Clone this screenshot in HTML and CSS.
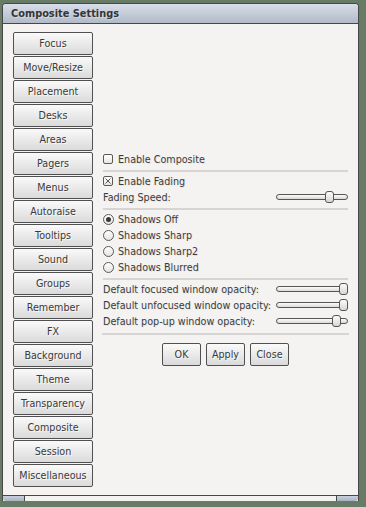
FILE: index.html
```html
<!DOCTYPE html>
<html>
<head>
<meta charset="utf-8">
<link rel="stylesheet" href="styles.css">
</head>
<body>
<div class="window">
  <div class="titlebar">Composite Settings</div>
  <div class="client">
    <div class="tabs">
      <div class="btn tab">Focus</div>
      <div class="btn tab">Move/Resize</div>
      <div class="btn tab">Placement</div>
      <div class="btn tab">Desks</div>
      <div class="btn tab">Areas</div>
      <div class="btn tab">Pagers</div>
      <div class="btn tab">Menus</div>
      <div class="btn tab">Autoraise</div>
      <div class="btn tab">Tooltips</div>
      <div class="btn tab">Sound</div>
      <div class="btn tab">Groups</div>
      <div class="btn tab">Remember</div>
      <div class="btn tab">FX</div>
      <div class="btn tab">Background</div>
      <div class="btn tab">Theme</div>
      <div class="btn tab">Transparency</div>
      <div class="btn tab">Composite</div>
      <div class="btn tab">Session</div>
      <div class="btn tab">Miscellaneous</div>
    </div>
    <div class="panel">
      <div class="content">
        <div class="row"><span class="check"></span><span class="label">Enable Composite</span></div>
        <div class="sep"></div>
        <div class="row"><span class="check checked"><svg width="8" height="8" viewBox="0 0 8 8"><path d="M1.5 1.5 L6.5 6.5 M6.5 1.5 L1.5 6.5" stroke="#555" stroke-width="1"/></svg></span><span class="label">Enable Fading</span></div>
        <div class="row"><span class="label">Fading Speed:</span><span class="slider"><span class="track"></span><span class="knob" style="left:49px"></span></span></div>
        <div class="sep"></div>
        <div class="row"><span class="radio on"></span><span class="label">Shadows Off</span></div>
        <div class="row"><span class="radio"></span><span class="label">Shadows Sharp</span></div>
        <div class="row"><span class="radio"></span><span class="label">Shadows Sharp2</span></div>
        <div class="row"><span class="radio"></span><span class="label">Shadows Blurred</span></div>
        <div class="sep"></div>
        <div class="row"><span class="label">Default focused window opacity:</span><span class="slider"><span class="track"></span><span class="knob" style="left:63px"></span></span></div>
        <div class="row"><span class="label">Default unfocused window opacity:</span><span class="slider"><span class="track"></span><span class="knob" style="left:63px"></span></span></div>
        <div class="row"><span class="label">Default pop-up window opacity:</span><span class="slider"><span class="track"></span><span class="knob" style="left:56px"></span></span></div>
        <div class="sep last"></div>
        <div class="actions">
          <div class="btn action">OK</div>
          <div class="btn action">Apply</div>
          <div class="btn action">Close</div>
        </div>
      </div>
    </div>
  </div>
  <div class="grips"><span class="grip left"></span><span class="grip right"></span></div>
</div>
</body>
</html>
```
FILE: styles.css
```css
html, body {
  margin: 0;
  padding: 0;
  background: #687b66;
  width: 366px;
  height: 507px;
  overflow: hidden;
  font-family: "DejaVu Sans", sans-serif;
  font-size: 9.6px;
  color: #3a3a3a;
}
.window {
  margin: 3px 0 0 2px;
  width: 355px;
  border: 1px solid #474747;
  border-bottom: none;
  border-radius: 4px 4px 0 0;
  background: #f4f3f1;
}
.titlebar {
  height: 19px;
  line-height: 19px;
  border-bottom: 1px solid #474747;
  border-radius: 3px 3px 0 0;
  background: linear-gradient(#d7dee9, #b2bac7);
  font-weight: bold;
  font-size: 9.8px;
  color: #353535;
  padding-left: 8px;
  text-shadow: 1px 1px 0 rgba(255,255,255,0.35);
}
.client {
  height: 472px;
  box-sizing: border-box;
  padding: 8px 10px 0 10px;
  display: flex;
  gap: 10px;
  border-bottom: 1px solid #474747;
}
.tabs {
  display: flex;
  flex-direction: column;
  gap: 1px;
  width: 80px;
}
.btn {
  box-sizing: border-box;
  border: 1px solid #505050;
  border-radius: 2px;
  background: linear-gradient(#fafafa, #dadada);
  color: #3a3a3a;
  text-align: center;
  text-shadow: 1px 1px 0 rgba(255,255,255,0.7);
}
.tab {
  height: 23px;
  line-height: 21px;
}
.panel {
  flex: 1;
  display: flex;
  align-items: center;
  padding-bottom: 10px;
}
.content {
  width: 245px;
}
.row {
  height: 16px;
  display: flex;
  align-items: center;
}
.label {
  flex: 1;
  white-space: nowrap;
  text-shadow: 1px 1px 0 rgba(0,0,0,0.07);
}
.check {
  box-sizing: border-box;
  flex: none;
  width: 10px;
  height: 10px;
  margin-right: 5px;
  border: 1px solid #5a5a5a;
  border-radius: 2px;
  background: linear-gradient(#ffffff, #e6e6e6);
  display: flex;
  align-items: center;
  justify-content: center;
}
.radio {
  box-sizing: border-box;
  flex: none;
  width: 11px;
  height: 11px;
  margin-right: 4px;
  border: 1px solid #5a5a5a;
  border-radius: 50%;
  background: linear-gradient(#ffffff, #e3e3e3);
  display: flex;
  align-items: center;
  justify-content: center;
}
.radio.on::after {
  content: "";
  width: 5px;
  height: 5px;
  border-radius: 50%;
  background: #3a3a3a;
}
.sep {
  height: 2px;
  background: #d6d5d3;
  margin: 3px 0 1px;
}
.sep.last {
  margin: 4px -1px 8px;
}
.slider {
  position: relative;
  flex: none;
  width: 72px;
  height: 12px;
  display: flex;
  align-items: center;
}
.track {
  box-sizing: border-box;
  width: 72px;
  height: 6px;
  border: 1px solid #555;
  border-radius: 3px;
  background: linear-gradient(#fbfbfb, #d9d9d9);
}
.knob {
  position: absolute;
  top: 0;
  box-sizing: border-box;
  width: 9px;
  height: 12px;
  border: 1px solid #555;
  border-radius: 3px;
  background: linear-gradient(#fcfcfc, #d6d6d6);
}
.actions {
  display: flex;
  justify-content: center;
  gap: 5px;
}
.action {
  height: 23px;
  line-height: 21px;
  min-width: 39px;
  padding: 0 4px;
}
.grips {
  height: 5px;
  display: flex;
  justify-content: space-between;
}
.grip {
  width: 21px;
  height: 5px;
  background: linear-gradient(#c9d1dd, #a9b2c1);
}
.grip.left {
  border-right: 1px solid #474747;
  border-bottom-left-radius: 3px;
}
.grip.right {
  border-left: 1px solid #474747;
  border-bottom-right-radius: 3px;
}
```
